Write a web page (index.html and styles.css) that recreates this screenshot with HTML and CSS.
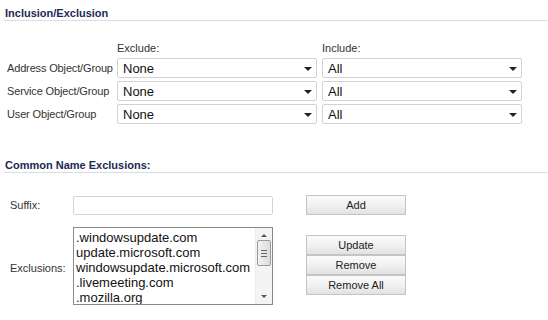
FILE: index.html
```html
<!DOCTYPE html>
<html lang="en">
<head>
    <meta charset="UTF-8">
    <title>Inclusion/Exclusion</title>
    <link rel="stylesheet" href="styles.css">
</head>
<body>
    <div class="section">
        <div class="section-title">Inclusion/Exclusion</div>

        <div class="object-grid">
            <div></div>
            <div class="col-head">Exclude:</div>
            <div class="col-head">Include:</div>

            <div class="row-label">Address Object/Group</div>
            <div class="combo"><span>None</span><span class="arrow"></span></div>
            <div class="combo"><span>All</span><span class="arrow"></span></div>

            <div class="row-label">Service Object/Group</div>
            <div class="combo"><span>None</span><span class="arrow"></span></div>
            <div class="combo"><span>All</span><span class="arrow"></span></div>

            <div class="row-label">User Object/Group</div>
            <div class="combo"><span>None</span><span class="arrow"></span></div>
            <div class="combo"><span>All</span><span class="arrow"></span></div>
        </div>
    </div>

    <div class="section second">
        <div class="section-title">Common Name Exclusions:</div>

        <div class="cn-row suffix-row">
            <div class="cn-label">Suffix:</div>
            <div class="text-input"></div>
            <div class="btn">Add</div>
        </div>

        <div class="cn-row list-row">
            <div class="cn-label">Exclusions:</div>
            <div class="listbox">
                <div class="list-items">
                    <div>.windowsupdate.com</div>
                    <div>update.microsoft.com</div>
                    <div>windowsupdate.microsoft.com</div>
                    <div>.livemeeting.com</div>
                    <div>.mozilla.org</div>
                </div>
                <div class="scrollbar">
                    <span class="sb-up"></span>
                    <span class="sb-thumb"><i></i><i></i><i></i></span>
                    <span class="sb-down"></span>
                </div>
            </div>
            <div class="btn-stack">
                <div class="btn">Update</div>
                <div class="btn">Remove</div>
                <div class="btn">Remove All</div>
            </div>
        </div>
    </div>
</body>
</html>
```

FILE: styles.css
```css
body {
    margin: 0;
    width: 548px;
    background: #fff;
    font-family: 'Liberation Sans', Arial, sans-serif;
    font-size: 11px;
    color: #333;
}

.section {
    padding-top: 7px;
}

.section.second {
    padding-top: 35px;
}

.section-title {
    font-weight: bold;
    font-size: 11px;
    color: #1b2a55;
    margin-left: 4px;
    padding: 0 0 1px 1px;
    height: 12px;
    line-height: 12px;
    border-bottom: 1px solid #dcdcdc;
}

.object-grid {
    display: grid;
    grid-template-columns: 105px 200px 200px;
    column-gap: 5px;
    row-gap: 3px;
    padding: 21px 0 0 7px;
    align-items: center;
}

.col-head {
    line-height: 13px;
}

.row-label {
    white-space: nowrap;
    letter-spacing: -0.15px;
}

.combo {
    height: 18px;
    border: 1px solid #d2d2d2;
    border-radius: 2px;
    display: flex;
    align-items: center;
    justify-content: space-between;
    padding: 0 4px 0 5px;
    font-size: 13px;
    color: #111;
}

.arrow {
    width: 0;
    height: 0;
    border-left: 4px solid transparent;
    border-right: 4px solid transparent;
    border-top: 4px solid #222;
    margin-top: 2px;
}

.cn-row {
    display: flex;
    align-items: center;
    padding-left: 10px;
}

.suffix-row {
    margin-top: 22px;
}

.list-row {
    margin-top: 12px;
    align-items: flex-start;
}

.cn-label {
    width: 63px;
}

.list-row .cn-label {
    align-self: center;
    padding-top: 4px;
}

.text-input {
    width: 198px;
    height: 17px;
    border: 1px solid #d4d4d4;
    border-radius: 2px;
}

.btn {
    width: 98px;
    height: 18px;
    border: 1px solid #c4c4c4;
    background: linear-gradient(#fbfbfb, #f1f1f1 50%, #e2e2e2);
    text-align: center;
    line-height: 18px;
    color: #222;
    font-size: 11px;
}

.suffix-row .btn {
    margin-left: 33px;
}

.btn-stack {
    margin-left: 33px;
    margin-top: 8px;
    display: flex;
    flex-direction: column;
}

.listbox {
    width: 198px;
    height: 76px;
    border: 1px solid #8a8a8a;
    display: flex;
    color: #111;
    font-size: 13px;
}

.list-items {
    flex: 1;
    padding: 2px 0 0 2px;
    line-height: 15px;
    overflow: hidden;
    white-space: nowrap;
}

.scrollbar {
    width: 16px;
    background: #f4f4f4;
    border-left: 1px solid #ececec;
    display: flex;
    flex-direction: column;
    align-items: center;
}

.sb-up,
.sb-down {
    width: 0;
    height: 0;
    border-left: 3px solid transparent;
    border-right: 3px solid transparent;
}

.sb-up {
    border-bottom: 3px solid #555;
    margin-top: 6px;
}

.sb-down {
    border-top: 3px solid #555;
    margin-top: auto;
    margin-bottom: 6px;
}

.sb-thumb {
    width: 12px;
    height: 24px;
    margin-top: 3px;
    border: 1px solid #9a9a9a;
    border-radius: 2px;
    background: linear-gradient(90deg, #f2f2f2, #dcdcdc);
    display: flex;
    flex-direction: column;
    justify-content: center;
    align-items: center;
    gap: 2px;
}

.sb-thumb i {
    display: block;
    width: 6px;
    height: 1px;
    background: #666;
}
```
